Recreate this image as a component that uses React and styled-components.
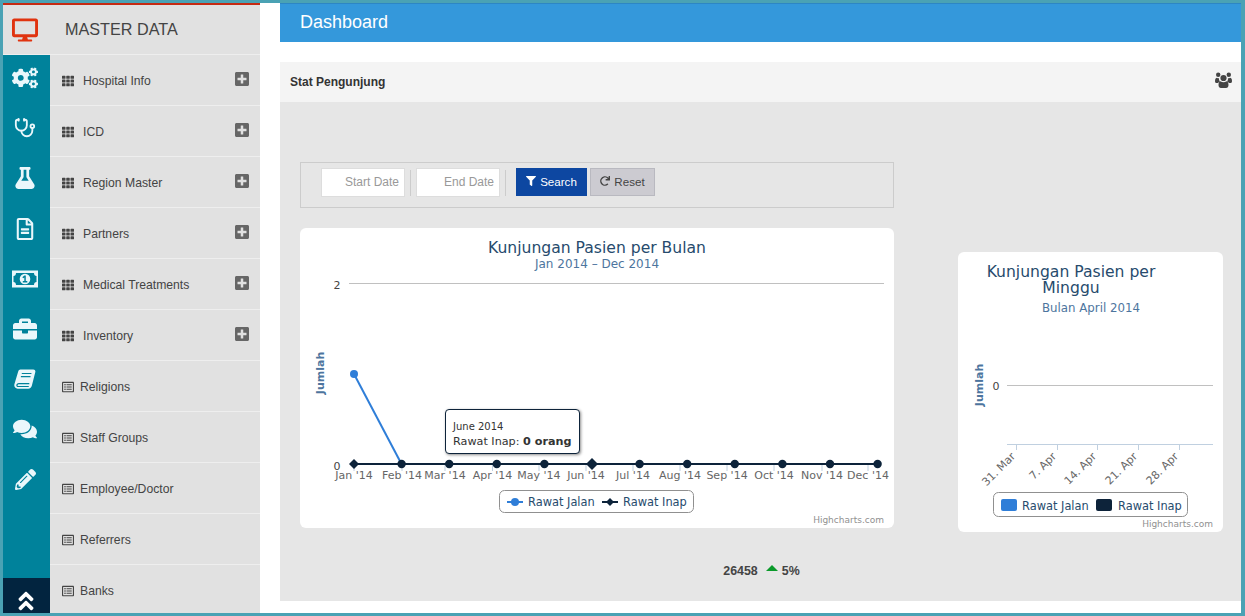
import React from 'react'
import styled, { createGlobalStyle } from 'styled-components'
import {
  FaDesktop, FaCogs, FaFlask, FaRegFileAlt, FaBriefcase, FaComments, FaPencilAlt,
  FaAngleDoubleUp, FaTh, FaRegListAlt, FaPlusSquare, FaFilter, FaRedo,
} from 'react-icons/fa'
import { Stethoscope } from 'lucide-react'

const GlobalStyle = createGlobalStyle`
  html, body {
    margin: 0;
    padding: 0;
    background: #fff;
    font-family: 'Liberation Sans', Arial, sans-serif;
  }
`

const Frame = styled.div`
  box-sizing: border-box;
  width: 1245px;
  height: 616px;
  border: solid #4aa2b4;
  border-width: 3px 4px 3px 3px;
  display: flex;
  overflow: hidden;
  background: #fff;
`
const Sidebar = styled.aside`
  width: 257px;
  flex: none;
  display: flex;
  flex-direction: column;
  background: #e1e1e1;
  border-top: 2px solid #c62a12;
`
const SideHead = styled.div`
  box-sizing: border-box;
  height: 50px;
  flex: none;
  display: flex;
  align-items: center;
  color: #444;
  font-size: 16.2px;
  border-bottom: 1px solid #eee;
  svg {
    width: 26px;
    height: 26px;
    margin: 0 27px 0 9px;
    color: #e0330f;
  }
`
const SideBody = styled.div`
  flex: 1;
  display: flex;
  min-height: 0;
`
const Rail = styled.nav`
  width: 47px;
  flex: none;
  background: #00829b;
  display: flex;
  flex-direction: column;
`
const RailItem = styled.div`
  height: 50.2px;
  flex: none;
  display: flex;
  justify-content: center;
  align-items: center;
  padding: 0 ${(p) => p.$nudge || 2}px 4px 0;
  box-sizing: border-box;
  color: #eaf7fb;
  svg {
    width: ${(p) => p.$size || 24}px;
    height: ${(p) => p.$size || 24}px;
  }
`
const RailFoot = styled.div`
  margin-top: auto;
  height: 35px;
  background: #02243f;
  color: #fff;
  display: flex;
  justify-content: center;
  align-items: flex-end;
  padding-right: 1px;
  svg {
    width: 24px;
    height: 24px;
  }
`
const Menu = styled.ul`
  list-style: none;
  margin: 0;
  padding: 0;
  flex: 1;
  overflow: hidden;
`
const MenuRow = styled.li`
  box-sizing: border-box;
  height: 51px;
  display: flex;
  align-items: center;
  padding: 2px 10px 0 12px;
  border-bottom: 1px solid #eee;
  color: #444;
  font-size: 12.2px;
  > svg:first-child {
    width: 12px;
    height: 12px;
    flex: none;
    color: #444;
    margin-right: ${(p) => (p.$group ? 9 : 6)}px;
  }
`
const PlusIcon = styled(FaPlusSquare)`
  margin-left: auto;
  width: 16px;
  height: 16px;
  color: #666;
  position: relative;
  top: -2px;
`
const Main = styled.main`
  flex: 1;
  min-width: 0;
  padding-left: 20px;
  display: flex;
  flex-direction: column;
`
const TopBar = styled.header`
  height: 39px;
  flex: none;
  background: #3498db;
  border-top: 1px solid #2d86c4;
  box-sizing: border-box;
  color: #fff;
  font-size: 18px;
  padding: 0 20px 2px;
  display: flex;
  align-items: center;
`
const Panel = styled.section`
  margin-top: 20px;
  height: 539px;
  display: flex;
  flex-direction: column;
  background: #e6e6e6;
`
const PanelHead = styled.div`
  height: 40px;
  flex: none;
  background: #f4f4f4;
  display: flex;
  align-items: center;
  justify-content: space-between;
  padding: 0 9px 0 10px;
  font-size: 12px;
  font-weight: bold;
  color: #333;
  svg {
    width: 17px;
    height: 16px;
    color: #444;
    position: relative;
    top: -2px;
  }
`
const PanelBody = styled.div`
  flex: 1;
  display: flex;
  flex-direction: column;
  padding: 60px 18px 0 20px;
`
const Columns = styled.div`
  display: flex;
  gap: 64px;
`
const LeftCol = styled.div`
  width: 594px;
  flex: none;
  display: flex;
  flex-direction: column;
  gap: 20px;
`
const RightCol = styled.div`
  width: 265px;
  flex: none;
  padding-top: 90px;
`
const FilterBar = styled.form`
  box-sizing: border-box;
  height: 46px;
  border: 1px solid #ccc;
  display: flex;
  align-items: flex-start;
  padding: 5px 0 0 20px;
  margin: 0;
`
const DateInput = styled.input`
  box-sizing: border-box;
  width: 84px;
  height: 29px;
  border: 1px solid #ddd;
  background: #fff;
  font: 12px 'Liberation Sans', Arial, sans-serif;
  text-align: right;
  padding: 0 5px 2px;
  outline: none;
  &::placeholder {
    color: #999;
    opacity: 1;
  }
`
const Divider = styled.span`
  width: 1px;
  height: 26px;
  margin: 2px 5px 0;
  background: #ccc;
`
const Button = styled.button`
  box-sizing: border-box;
  height: 28px;
  padding: 0 0 2px;
  width: ${(p) => p.$width}px;
  margin: ${(p) => p.$margin};
  border: 1px solid ${(p) => (p.$primary ? '#0d47a1' : '#b9b9c0')};
  background: ${(p) => (p.$primary ? '#0d47a1' : '#cccbd1')};
  color: ${(p) => (p.$primary ? '#fff' : '#444')};
  font: 11.6px 'Liberation Sans', Arial, sans-serif;
  display: flex;
  align-items: center;
  justify-content: center;
  gap: 4px;
  svg {
    width: 10px;
    height: 10px;
  }
`
const Card = styled.div`
  position: relative;
  background: #fff;
  border-radius: 6px;
  width: ${(p) => p.$width}px;
  height: ${(p) => p.$height}px;
  svg {
    display: block;
  }
`
const SvgText = styled.text`
  font-family: 'DejaVu Sans', Verdana, sans-serif;
  font-size: ${(p) => p.$size || 11}px;
  font-weight: ${(p) => (p.$bold ? 'bold' : 'normal')};
  fill: ${(p) => p.$color || '#666'};
`
const Tip = styled.div`
  position: absolute;
  left: 145px;
  top: 181px;
  box-sizing: border-box;
  width: 135px;
  height: 45px;
  background: #fff;
  border: 1px solid #0d233a;
  border-radius: 4px;
  box-shadow: 1px 1px 3px rgba(0, 0, 0, 0.45);
  padding: 10px 7px;
  font-family: 'DejaVu Sans', Verdana, sans-serif;
  color: #333;
  white-space: nowrap;
`
const TipDate = styled.div`
  font-size: 10px;
  line-height: 13px;
`
const TipValue = styled.div`
  font-size: 11.2px;
  line-height: 18px;
  b {
    font-weight: bold;
  }
`
const Stats = styled.div`
  margin-top: 32px;
  display: flex;
  justify-content: center;
  align-items: center;
  gap: 8px;
  font-size: 12.4px;
  font-weight: bold;
  color: #444;
`
const Triangle = styled.span`
  width: 0;
  height: 0;
  margin-right: -4px;
  border: 6px solid transparent;
  border-top: 0;
  border-bottom: 6px solid #0a9a2a;
  position: relative;
  top: -3px;
`

const MoneyIcon = () => (
  <svg viewBox="0 0 26 17">
    <path
      fill="currentColor"
      fillRule="evenodd"
      d="M0 0h26v17H0zM4 2.500C4 4.500 3 5.500 1.500 5.500v6C3 11.500 4 12.500 4 14.500h18c0-2 1-3 2.500-3v-6C23 5.500 22 4.500 22 2.500zM13 3.200a5.300 5.300 0 1 1 0 10.600a5.300 5.300 0 0 1 0-10.600zM13.800 5h-1.500l-2 1.800 1 1 1-.8v3.500h-1.500V12h4.500v-1.500h-1.500z"
    />
  </svg>
)

const BookIcon = () => (
  <svg viewBox="0 0 24 22">
    <path
      fill="currentColor"
      d="M7 .500h14c1.800 0 2.700 1.300 2.200 3L19.500 18c-.5 2-1.800 3.500-4 3.500H4c-2.800 0-4.300-2.200-3.500-5L4.500 3C5 1.300 5.800.500 7 .500z"
    />
    <path
      fill="none"
      stroke="#00829b"
      strokeWidth="1.300"
      d="M8.500 5h10.500M7.500 8.500H18M3.200 17.500c.3-.9 1-1.500 2-1.500h11.500M3.200 17.500c-.2 1 .4 1.700 1.300 1.700h11.600"
    />
  </svg>
)

const UsersIcon = () => (
  <svg viewBox="0 0 17 16">
    <g fill="currentColor">
      <circle cx="3.200" cy="2.700" r="2.200" />
      <circle cx="13.800" cy="2.700" r="2.200" />
      <circle cx="8.500" cy="6" r="3.100" />
      <path d="M0 9c0-2.300 1-3.300 2-3.300.6.500 1.400.8 2.100.6-.3 1.100.1 2.300.9 3.100-.9.300-1.600.9-2 1.600H1.200C.4 11 0 10.300 0 9z" />
      <path d="M17 9c0-2.300-1-3.300-2-3.300-.6.500-1.400.8-2.100.6.300 1.100-.1 2.300-.9 3.100.9.300 1.600.9 2 1.600h1.800c.8 0 1.200-.7 1.200-2z" />
      <path d="M5.500 9.200c1.700 1.300 4.300 1.300 6 0 1.500.3 2 1.800 2 3.800 0 1.800-1 3-2.500 3H6c-1.500 0-2.500-1.200-2.500-3 0-2 .5-3.500 2-3.800z" />
    </g>
  </svg>
)

const groups = ['Hospital Info', 'ICD', 'Region Master', 'Partners', 'Medical Treatments', 'Inventory']
const plain = ['Religions', 'Staff Groups', 'Employee/Doctor', 'Referrers', 'Banks']
const railIcons = [
  [FaCogs, 26, 3], [Stethoscope, 22, 4], [FaFlask, 22, 3], [FaRegFileAlt, 22, 3], [MoneyIcon, 26, 3],
  [FaBriefcase, 24, 3], [BookIcon, 22, 3], [FaComments, 24, 3], [FaPencilAlt, 21, 3],
]

const months = ['Jan', 'Feb', 'Mar', 'Apr', 'May', 'Jun', 'Jul', 'Aug', 'Sep', 'Oct', 'Nov', 'Dec']
const monthX = months.map((_, i) => 54 + i * 47.6)
const labelX = [54, 102, 145, 192.5, 239, 286, 333, 380, 427, 474, 522, 568]
const weeks = [
  ['31. Mar', 59], ['7. Apr', 100], ['14. Apr', 140], ['21. Apr', 181], ['28. Apr', 222],
]

const MonthlyChart = () => (
  <Card $width={594} $height={300}>
    <svg width="594" height="300">
      <SvgText x="297" y="25" textAnchor="middle" $size={15.6} $color="#274b6d">Kunjungan Pasien per Bulan</SvgText>
      <SvgText x="297" y="40" textAnchor="middle" $size={12} $color="#4d759e">Jan 2014 – Dec 2014</SvgText>
      <line x1="49" x2="584" y1="55.500" y2="55.500" stroke="#c0c0c0" />
      <SvgText x="37" y="61" textAnchor="middle" $color="#444">2</SvgText>
      <SvgText x="37" y="242" textAnchor="middle" $color="#444">0</SvgText>
      <SvgText transform="translate(24 145) rotate(-90)" textAnchor="middle" $size={11} $bold $color="#4d759e">Jumlah</SvgText>
      {labelX.map((x, i) => (
        <line key={i} x1={x} x2={x} y1="236" y2="243" stroke="#c0d0e0" />
      ))}
      <polyline points="54,146 101.500,236" fill="none" stroke="#2f7ed8" strokeWidth="2" />
      <line x1="54" x2="578" y1="236" y2="236" stroke="#0d233a" strokeWidth="2" />
      <circle cx="54" cy="146" r="4" fill="#2f7ed8" />
      {monthX.map((x, i) =>
        i === 0 ? (
          <path key={i} fill="#0d233a" d={`M${x} 231l5 5-5 5-5-5z`} />
        ) : i === 5 ? (
          <path key={i} fill="#0d233a" d={`M${x} 230l6 6-6 6-6-6z`} />
        ) : (
          <circle key={i} cx={x} cy="236" r="4.200" fill="#0d233a" />
        ),
      )}
      {months.map((m, i) => (
        <SvgText key={m} x={labelX[i]} y="251" textAnchor="middle" $size={11}>{`${m} '14`}</SvgText>
      ))}
      <rect x="199.500" y="262.500" width="194" height="22" rx="5" fill="#fff" stroke="#909090" />
      <line x1="207" x2="223" y1="274" y2="274" stroke="#2f7ed8" strokeWidth="2" />
      <circle cx="215" cy="274" r="4" fill="#2f7ed8" />
      <SvgText x="228" y="278" $size={11.4} $color="#274b6d">Rawat Jalan</SvgText>
      <line x1="302" x2="318" y1="274" y2="274" stroke="#0d233a" strokeWidth="2" />
      <path fill="#0d233a" d="M310 270l4 4-4 4-4-4z" />
      <SvgText x="323" y="278" $size={11.4} $color="#274b6d">Rawat Inap</SvgText>
      <SvgText x="584" y="295" textAnchor="end" $size={9} $color="#909090">Highcharts.com</SvgText>
    </svg>
    <Tip>
      <TipDate>June 2014</TipDate>
      <TipValue>Rawat Inap: <b>0 orang</b></TipValue>
    </Tip>
  </Card>
)

const WeeklyChart = () => (
  <Card $width={265} $height={280}>
    <svg width="265" height="280">
      <SvgText x="113" y="25" textAnchor="middle" $size={15.6} $color="#274b6d">Kunjungan Pasien per</SvgText>
      <SvgText x="113" y="41" textAnchor="middle" $size={15.6} $color="#274b6d">Minggu</SvgText>
      <SvgText x="133" y="60" textAnchor="middle" $size={11.8} $color="#4d759e">Bulan April 2014</SvgText>
      <SvgText transform="translate(25 133) rotate(-90)" textAnchor="middle" $size={11} $bold $color="#4d759e">Jumlah</SvgText>
      <line x1="49" x2="255" y1="133.500" y2="133.500" stroke="#c0c0c0" />
      <SvgText x="38" y="138" textAnchor="middle" $color="#444">0</SvgText>
      <line x1="49" x2="255" y1="192.500" y2="192.500" stroke="#c0d0e0" />
      {weeks.map(([label, x]) => (
        <g key={label}>
          <line x1={x - 0.5} x2={x - 0.5} y1="193" y2="198" stroke="#c0d0e0" />
          <SvgText transform={`translate(${x - 1} 205) rotate(-45)`} textAnchor="end" $size={11}>{label}</SvgText>
        </g>
      ))}
      <rect x="35.500" y="240.500" width="194" height="24" rx="5" fill="#fff" stroke="#909090" />
      <rect x="43" y="247" width="16" height="12" rx="2" fill="#2f7ed8" />
      <SvgText x="64" y="258" $size={11.4} $color="#274b6d">Rawat Jalan</SvgText>
      <rect x="138" y="247" width="16" height="12" rx="2" fill="#0d233a" />
      <SvgText x="160" y="258" $size={11.4} $color="#274b6d">Rawat Inap</SvgText>
      <SvgText x="255" y="275" textAnchor="end" $size={9} $color="#909090">Highcharts.com</SvgText>
    </svg>
  </Card>
)

export default function App() {
  return (
    <>
      <GlobalStyle />
      <Frame>
        <Sidebar>
          <SideHead>
            <FaDesktop />
            MASTER DATA
          </SideHead>
          <SideBody>
            <Rail>
              {railIcons.map(([Icon, size, nudge], i) => (
                <RailItem key={i} $size={size} $nudge={nudge}><Icon /></RailItem>
              ))}
              <RailFoot><FaAngleDoubleUp /></RailFoot>
            </Rail>
            <Menu>
              {groups.map((g) => (
                <MenuRow key={g} $group>
                  <FaTh />
                  {g}
                  <PlusIcon />
                </MenuRow>
              ))}
              {plain.map((g) => (
                <MenuRow key={g}>
                  <FaRegListAlt />
                  {g}
                </MenuRow>
              ))}
            </Menu>
          </SideBody>
        </Sidebar>
        <Main>
          <TopBar>Dashboard</TopBar>
          <Panel>
            <PanelHead>
              Stat Pengunjung
              <UsersIcon />
            </PanelHead>
            <PanelBody>
              <Columns>
                <LeftCol>
                  <FilterBar>
                    <DateInput placeholder="Start Date" />
                    <Divider />
                    <DateInput placeholder="End Date" />
                    <Divider />
                    <Button type="button" $primary $width={71} $margin="0 3px 0 5px"><FaFilter />Search</Button>
                    <Button type="button" $width={65}><FaRedo />Reset</Button>
                  </FilterBar>
                  <MonthlyChart />
                </LeftCol>
                <RightCol>
                  <WeeklyChart />
                </RightCol>
              </Columns>
              <Stats>
                26458
                <Triangle />
                5%
              </Stats>
            </PanelBody>
          </Panel>
        </Main>
      </Frame>
    </>
  )
}
